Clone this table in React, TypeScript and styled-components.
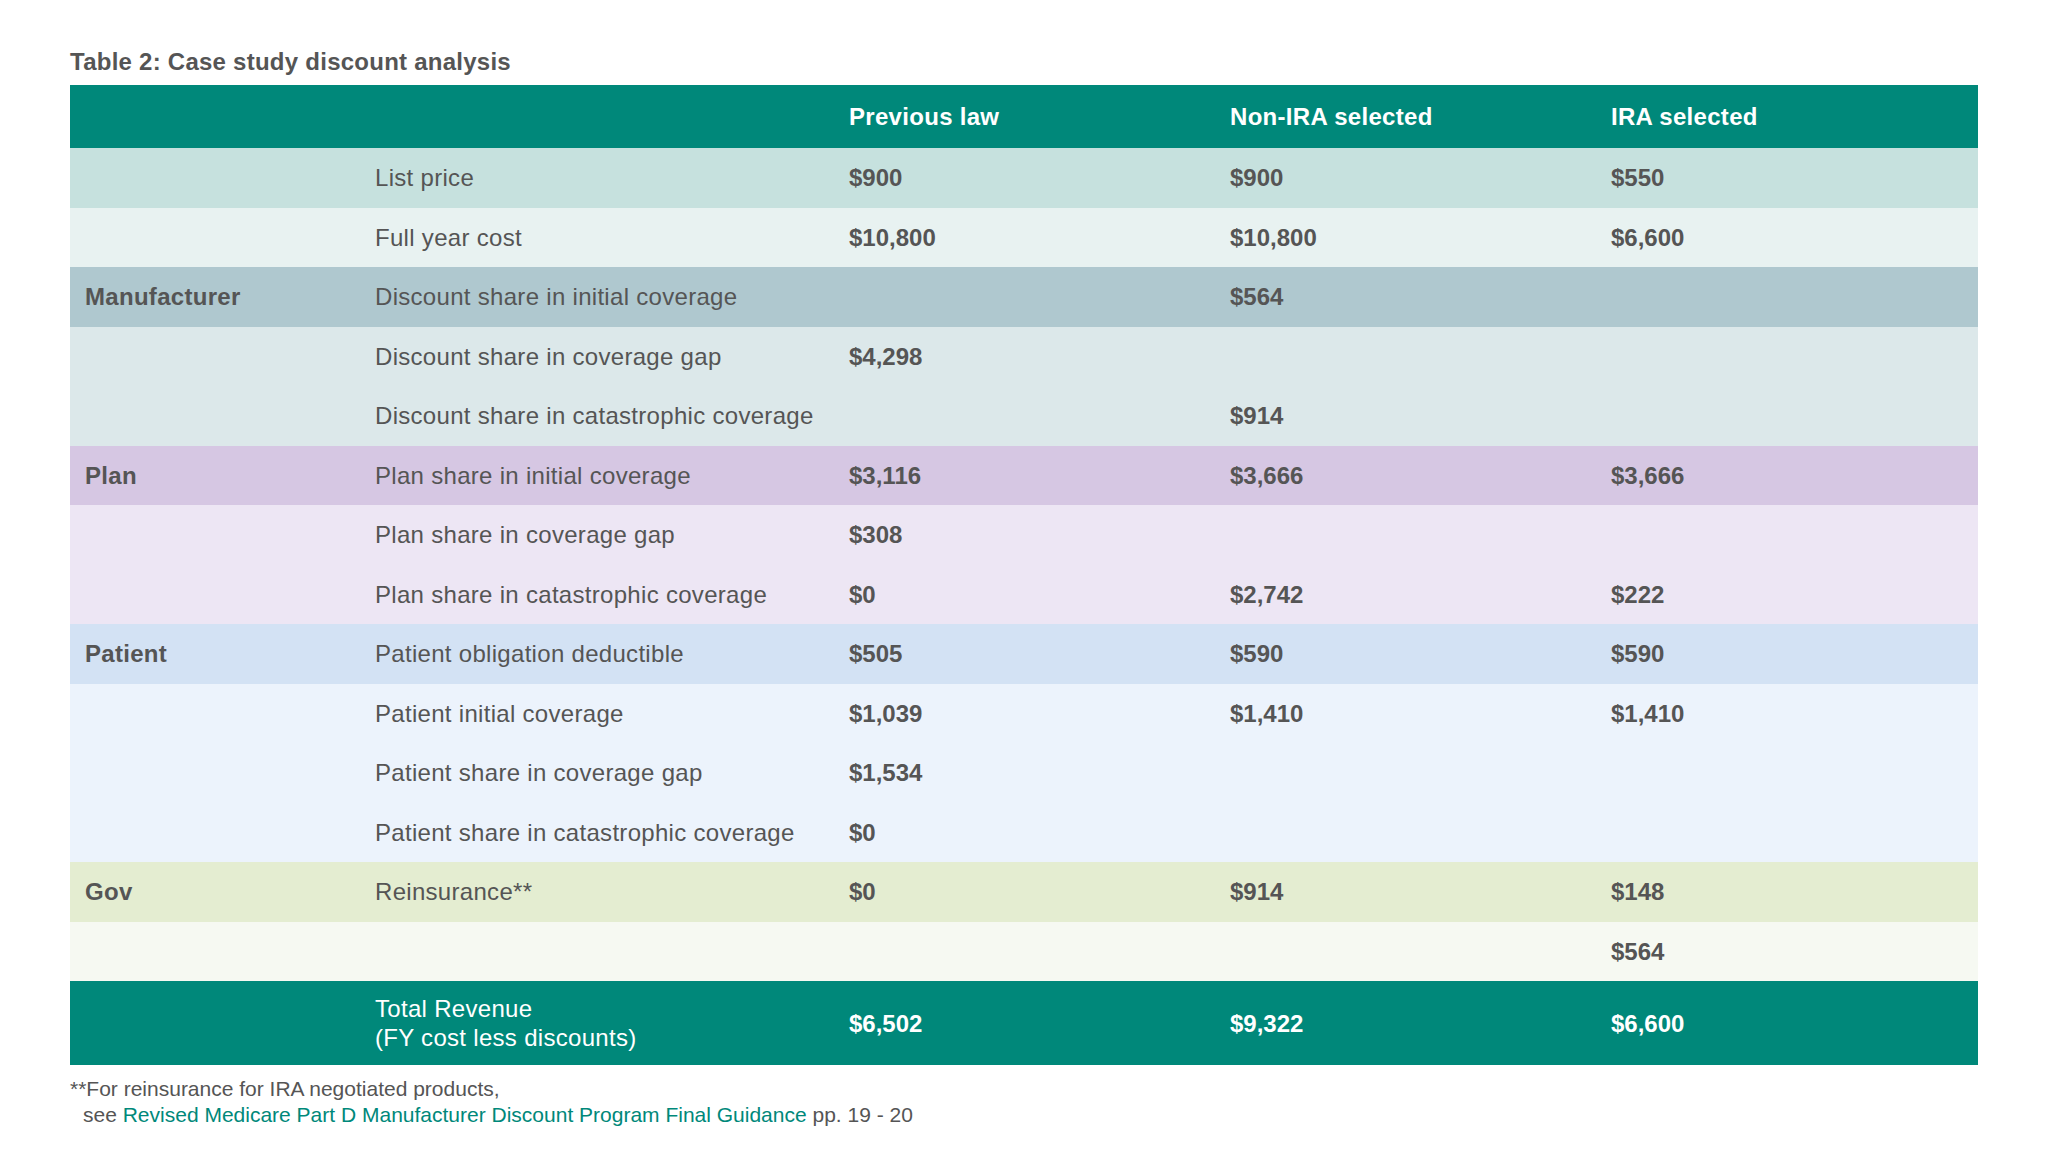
import React from "react";
import styled, { createGlobalStyle } from "styled-components";

const GlobalStyle = createGlobalStyle`
  html, body {
    margin: 0;
    padding: 0;
    background: #ffffff;
  }
  body {
    font-family: "Liberation Sans", Arial, Helvetica, sans-serif;
    color: #555555;
  }
`;

const TEAL = "#00887a";
const COLS = "290px 474px 381px 381px 1fr";

const Page = styled.main`
  width: 1908px;
  padding: 48px 70px 0 70px;
`;

const Title = styled.h2`
  margin: 0 0 9px 0;
  font-size: 24px;
  line-height: 28px;
  font-weight: 700;
  letter-spacing: 0.25px;
  color: #555555;
`;

const Table = styled.section`
  display: flex;
  flex-direction: column;
`;

const Row = styled.div<{ $bg: string; $h: string }>`
  display: grid;
  grid-template-columns: ${COLS};
  align-items: center;
  height: ${(p) => p.$h};
  background: ${(p) => p.$bg};
`;

const Cell = styled.div<{ $bold?: boolean; $light?: boolean; $num?: boolean }>`
  padding-left: 15px;
  font-size: 24px;
  line-height: 29px;
  font-weight: ${(p) => (p.$bold ? 700 : 400)};
  letter-spacing: ${(p) => (p.$num ? "0" : "0.3px")};
  color: ${(p) => (p.$light ? "#ffffff" : "#555555")};
  white-space: nowrap;
`;

const Footnote = styled.div`
  margin-top: 11px;
  font-size: 21px;
  line-height: 26px;
  color: #555555;
`;

const FootLine = styled.div<{ $indent?: boolean }>`
  padding-left: ${(p) => (p.$indent ? "13px" : "0")};
`;

const Link = styled.a`
  color: ${TEAL};
  text-decoration: none;
`;

type DataRow = {
  bg: string;
  group?: string;
  label: string;
  v: [string, string, string];
};

const rows: DataRow[] = [
  { bg: "#c6e1de", label: "List price", v: ["$900", "$900", "$550"] },
  { bg: "#e8f2f1", label: "Full year cost", v: ["$10,800", "$10,800", "$6,600"] },
  { bg: "#afc8cf", group: "Manufacturer", label: "Discount share in initial coverage", v: ["", "$564", ""] },
  { bg: "#dce8ea", label: "Discount share in coverage gap", v: ["$4,298", "", ""] },
  { bg: "#dce8ea", label: "Discount share in catastrophic coverage", v: ["", "$914", ""] },
  { bg: "#d6c7e3", group: "Plan", label: "Plan share in initial coverage", v: ["$3,116", "$3,666", "$3,666"] },
  { bg: "#ede6f4", label: "Plan share in coverage gap", v: ["$308", "", ""] },
  { bg: "#ede6f4", label: "Plan share in catastrophic coverage", v: ["$0", "$2,742", "$222"] },
  { bg: "#d3e2f4", group: "Patient", label: "Patient obligation deductible", v: ["$505", "$590", "$590"] },
  { bg: "#ecf3fc", label: "Patient initial coverage", v: ["$1,039", "$1,410", "$1,410"] },
  { bg: "#ecf3fc", label: "Patient share in coverage gap", v: ["$1,534", "", ""] },
  { bg: "#ecf3fc", label: "Patient share in catastrophic coverage", v: ["$0", "", ""] },
  { bg: "#e4edd1", group: "Gov", label: "Reinsurance**", v: ["$0", "$914", "$148"] },
  { bg: "#f6f9f2", label: "", v: ["", "", "$564"] },
];

export default function App() {
  return (
    <>
      <GlobalStyle />
      <Page>
        <Title>Table 2: Case study discount analysis</Title>
        <Table>
          <Row $bg={TEAL} $h="63px">
            <Cell />
            <Cell />
            <Cell $bold $light>Previous law</Cell>
            <Cell $bold $light>Non-IRA selected</Cell>
            <Cell $bold $light>IRA selected</Cell>
          </Row>
          {rows.map((r, i) => (
            <Row key={i} $bg={r.bg} $h="59.5px">
              <Cell $bold>{r.group ?? ""}</Cell>
              <Cell>{r.label}</Cell>
              {r.v.map((val, j) => (
                <Cell key={j} $bold $num>
                  {val}
                </Cell>
              ))}
            </Row>
          ))}
          <Row $bg={TEAL} $h="84px">
            <Cell />
            <Cell $light>
              Total Revenue
              <br />
              (FY cost less discounts)
            </Cell>
            <Cell $bold $light $num>$6,502</Cell>
            <Cell $bold $light $num>$9,322</Cell>
            <Cell $bold $light $num>$6,600</Cell>
          </Row>
        </Table>
        <Footnote>
          <FootLine>**For reinsurance for IRA negotiated products,</FootLine>
          <FootLine $indent>
            see <Link href="#">Revised Medicare Part D Manufacturer Discount Program Final Guidance</Link> pp. 19 - 20
          </FootLine>
        </Footnote>
      </Page>
    </>
  );
}
